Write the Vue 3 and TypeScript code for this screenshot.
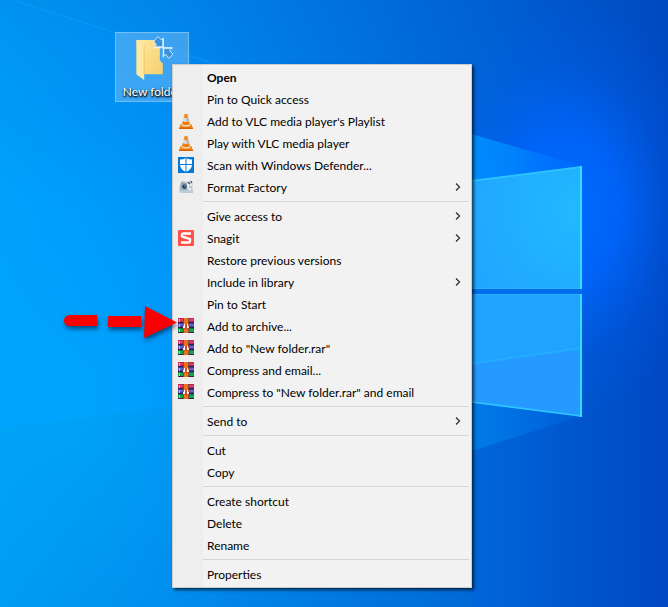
<script setup lang="ts">
type IconName = 'vlc' | 'defender' | 'factory' | 'snagit' | 'winrar'

interface MenuItem {
  label: string
  icon?: IconName
  submenu?: boolean
  primary?: boolean
}

const groups: MenuItem[][] = [
  [
    { label: 'Open', primary: true },
    { label: 'Pin to Quick access' },
    { label: "Add to VLC media player's Playlist", icon: 'vlc' },
    { label: 'Play with VLC media player', icon: 'vlc' },
    { label: 'Scan with Windows Defender...', icon: 'defender' },
    { label: 'Format Factory', icon: 'factory', submenu: true },
  ],
  [
    { label: 'Give access to', submenu: true },
    { label: 'Snagit', icon: 'snagit', submenu: true },
    { label: 'Restore previous versions' },
    { label: 'Include in library', submenu: true },
    { label: 'Pin to Start' },
    { label: 'Add to archive...', icon: 'winrar' },
    { label: 'Add to "New folder.rar"', icon: 'winrar' },
    { label: 'Compress and email...', icon: 'winrar' },
    { label: 'Compress to "New folder.rar" and email', icon: 'winrar' },
  ],
  [{ label: 'Send to', submenu: true }],
  [{ label: 'Cut' }, { label: 'Copy' }],
  [{ label: 'Create shortcut' }, { label: 'Delete' }, { label: 'Rename' }],
  [{ label: 'Properties' }],
]
</script>

<template>
  <main class="desktop">
    <svg class="wallpaper" viewBox="0 0 668 607" preserveAspectRatio="none" aria-hidden="true">
      <defs>
        <linearGradient id="base" x1="0" y1="0" x2="1" y2="0">
          <stop offset="0" stop-color="#00a4fb" />
          <stop offset="0.25" stop-color="#0092f5" />
          <stop offset="0.5" stop-color="#007ae6" />
          <stop offset="0.75" stop-color="#0062d6" />
          <stop offset="1" stop-color="#0047c2" />
        </linearGradient>
        <linearGradient id="topShade" x1="0" y1="0" x2="0" y2="1">
          <stop offset="0" stop-color="#004fb8" stop-opacity="0.2" />
          <stop offset="0.35" stop-color="#0060c8" stop-opacity="0" />
        </linearGradient>
        <radialGradient id="glow" gradientUnits="userSpaceOnUse" cx="0" cy="0" r="1" gradientTransform="translate(565 210) scale(150 210)">
          <stop offset="0" stop-color="#006cff" />
          <stop offset="0.35" stop-color="#0066ff" stop-opacity="0.85" />
          <stop offset="0.7" stop-color="#0060f4" stop-opacity="0.25" />
          <stop offset="1" stop-color="#0060ff" stop-opacity="0" />
        </radialGradient>
        <radialGradient id="leftGlow" gradientUnits="userSpaceOnUse" cx="0" cy="0" r="1" gradientTransform="translate(70 400) scale(230 280)">
          <stop offset="0" stop-color="#00adff" stop-opacity="0.7" />
          <stop offset="1" stop-color="#00a8ff" stop-opacity="0" />
        </radialGradient>
        <linearGradient id="lowerShade" x1="0" y1="0" x2="1" y2="1">
          <stop offset="0" stop-color="#0098e8" stop-opacity="0.2" />
          <stop offset="1" stop-color="#0070cc" stop-opacity="0.3" />
        </linearGradient>
        <radialGradient id="pane" gradientUnits="userSpaceOnUse" cx="582" cy="210" r="150">
          <stop offset="0" stop-color="#22b9ff" />
          <stop offset="1" stop-color="#20a2ff" />
        </radialGradient>
        <linearGradient id="beam" gradientUnits="userSpaceOnUse" x1="440" y1="0" x2="582" y2="0">
          <stop offset="0" stop-color="#0093ff" />
          <stop offset="0.5" stop-color="#0088ff" stop-opacity="0.85" />
          <stop offset="1" stop-color="#0070ff" stop-opacity="0.3" />
        </linearGradient>
        <linearGradient id="lowBeam" gradientUnits="userSpaceOnUse" x1="440" y1="0" x2="582" y2="0">
          <stop offset="0" stop-color="#0086ee" />
          <stop offset="1" stop-color="#0068e4" stop-opacity="0.4" />
        </linearGradient>
      </defs>
      <rect width="668" height="607" fill="url(#base)" />
      <rect width="668" height="607" fill="url(#topShade)" />
      <rect width="668" height="607" fill="url(#leftGlow)" />
      <path d="M0 0H12L472 136V360L0 428Z" fill="#0098ff" opacity=".18" />
      <path d="M0 428L172 406L472 360V607H0Z" fill="url(#lowerShade)" />
      <path d="M12 0L250 75" stroke="#35aef8" opacity=".28" />
      <rect x="400" width="268" height="490" fill="url(#glow)" />
      <path d="M440 125L582 166L440 186Z" fill="url(#beam)" />
      <path d="M440 390L582 416L440 461Z" fill="url(#lowBeam)" />
      <path d="M440 283H582V302H440Z" fill="#006eea" />
      <path d="M440 184L582 166V289H440Z" fill="url(#pane)" />
      <path d="M440 294H582V417L440 398Z" fill="#2499ff" />
      <path d="M440 294H582V348L440 368Z" fill="#20a4ff" opacity=".85" />
      <path d="M440 368L582 348" stroke="#25b4ff" stroke-width="2" opacity=".7" />
      <path d="M440 288.500H582M440 294.500H582" stroke="#38b6ff" opacity=".6" />
      <path d="M440 185L582 167M440 398L582 416" fill="none" stroke="#2cc5ff" stroke-width="1.500" />
      <path d="M581 166V289M581 294V417" fill="none" stroke="#35ddff" stroke-width="2" />
    </svg>

    <div class="shortcut">
      <svg class="folder" viewBox="0 0 44 48" aria-hidden="true">
        <defs>
          <linearGradient id="folderFront" x1="0" y1="0" x2="1" y2="1">
            <stop offset="0" stop-color="#ffe9a3" />
            <stop offset="1" stop-color="#f5d06d" />
          </linearGradient>
        </defs>
        <path d="M6 4H26L30 9V25L33 28V39H13Z" fill="url(#folderFront)" />
        <path d="M6 4L14 10V45L6 39Z" fill="#ffe8a0" />
        <path d="M14 10V39" stroke="#e8c360" stroke-width=".8" />
        <path d="M25 4L28 0.500L31.500 4L33 2.500V11H24.500L26.500 9L24 6Z" fill="#3893df" stroke="#d6eafa" />
        <path d="M34 12.500H42.500L40 15L43.500 18.500L39 23L36 18.500L34 20.500Z" fill="#3893df" stroke="#d6eafa" />
        <path d="M33.500 2V12H24M33.500 22V12H43" fill="none" stroke="#f4faff" />
      </svg>
      <span class="shortcut-name">New folder</span>
    </div>

    <div class="context-menu" role="menu" aria-label="New folder">
      <div v-for="(group, index) in groups" :key="index" class="group" role="group">
        <button v-for="item in group" :key="item.label" type="button" role="menuitem" class="item" :class="{ primary: item.primary }">
          <span class="icon" aria-hidden="true">
            <svg v-if="item.icon === 'vlc'" viewBox="0 0 16 16">
              <path d="M2.500 11H13.500L15 16H1Z" fill="#f28a1c" />
              <path d="M1 14.500H15V16H1Z" fill="#d96300" />
              <path d="M7 0H9L12.500 12Q8 15 3.500 12Z" fill="#e8e5e0" />
              <path d="M6.700 1H9.300L10.300 4.500Q8 5.500 5.700 4.500Z" fill="#f58a1d" />
              <path d="M4.900 8Q8 9.500 11.100 8L12 11Q8 13.500 4 11Z" fill="#f27c0b" />
              <path d="M5.700 4.500Q8 5.500 10.300 4.500L11.100 8Q8 9.500 4.900 8Z" fill="#d9dadb" />
              <path d="M8 5H10.400L11.100 8L9 8.700Z" fill="#b4b7ba" />
            </svg>
            <svg v-else-if="item.icon === 'defender'" viewBox="0 0 16 16">
              <path d="M0 0H16V16H0Z" fill="#0078d7" />
              <path d="M8 1Q11 2.500 14 2.500V7Q14 12.500 8 15Q2 12.500 2 7V2.500Q5 2.500 8 1Z" fill="#fff" />
              <path d="M8 1V15M2 7.500H14" stroke="#0078d7" />
            </svg>
            <svg v-else-if="item.icon === 'factory'" viewBox="0 0 16 16">
              <path d="M2 4L5 2L9 3L13 2L15 6L14 14L3 14L1 12Z" fill="#c2ccd5" />
              <path d="M2 5L5 3L7 4L4 13L2 12Z" fill="#b1bdc8" />
              <path d="M2 11L5 10L10 13L15 11V14H3Z" fill="#b9c9d6" />
              <circle cx="6.500" cy="7.500" r="3.500" fill="#8397ab" />
              <circle cx="6.500" cy="7.500" r="2" fill="#203a5c" />
              <circle cx="7" cy="7" r=".8" fill="#80b6db" />
              <path d="M9 5L13 4L15 7L12 12L9 9Z" fill="#e6ebf0" />
              <path d="M10 3L12 5M13 2L14 4" stroke="#475767" stroke-width="1.300" />
              <path d="M11 8L14 8M3 4L5 3" stroke="#8a99a8" />
            </svg>
            <svg v-else-if="item.icon === 'snagit'" viewBox="0 0 16 16">
              <rect width="16" height="16" rx="1" fill="#ff5147" />
              <path d="M13 3.500H5.500Q4 3.500 4 5V6.300L12 9.200V11Q12 12.500 10.500 12.500H3" fill="none" stroke="#fff" stroke-width="2.400" />
            </svg>
            <svg v-else-if="item.icon === 'winrar'" viewBox="0 0 16 16">
              <path d="M0 0H16V5H0Z" fill="#bc2358" />
              <path d="M0 1H16V3H0Z" fill="#df3b67" />
              <path d="M0 5H16V10H0Z" fill="#3e3c9e" />
              <path d="M0 6H16V8H0Z" fill="#6260c5" />
              <path d="M0 10H16V15H0Z" fill="#087737" />
              <path d="M0 11H16V14H0Z" fill="#16a24b" />
              <path d="M0 4.500H16M0 9.500H16M0 14.500H16" stroke="#342044" />
              <path d="M1.500 1V4M1.500 6V9M1.500 11V14" stroke="#e8ca48" />
              <path d="M5 0H11V15H5Z" fill="#7d4934" />
              <path d="M6 0H10V15H6Z" fill="#ef711f" />
              <path d="M5 6H11V11H5Z" fill="#d44e26" />
              <path d="M6 6H7V10H6ZM9 6H10V10H9Z" fill="#fff" />
              <path d="M5 8H6V10H5ZM10 8H11V10H10Z" fill="#f3e6e0" />
            </svg>
          </span>
          <span class="label">{{ item.label }}</span>
          <svg v-if="item.submenu" class="chevron" viewBox="0 0 6 8" aria-hidden="true">
            <path d="M1 0.500L4.500 4L1 7.500" fill="none" stroke="#333" stroke-width="1.300" />
          </svg>
        </button>
      </div>
    </div>

    <svg class="pointer" viewBox="0 0 120 40" aria-hidden="true">
      <path d="M7 12H35V23H7Q2 22 2 17.500Q2 13 7 12ZM46 13H79V24H46ZM83 3L115 19.500L82 35Z" fill="#fb0000" />
    </svg>
  </main>
</template>

<style>
body {
  margin: 0;
}
</style>

<style scoped>
.desktop {
  position: relative;
  min-height: 100vh;
  overflow: hidden;
  background: #0078e6;
  font-family: Lato, "Open Sans", sans-serif;
  font-size: 12px;
}

.wallpaper {
  position: absolute;
  inset: 0;
  width: 100%;
  height: 100%;
}

.shortcut {
  position: absolute;
  top: 32px;
  left: 115px;
  display: flex;
  flex-direction: column;
  align-items: center;
  box-sizing: border-box;
  width: 74px;
  height: 70px;
  padding-top: 3px;
  border: 1px solid #70c0f8;
  background: rgb(120 190 245 / 50%);
}

.folder {
  width: 44px;
  height: 48px;
}

.shortcut-name {
  color: #fff;
  line-height: 18px;
  white-space: nowrap;
  text-shadow: 1px 1px 2px #000, 0 1px 2px #000;
}

.context-menu {
  position: absolute;
  top: 64px;
  left: 172px;
  box-sizing: border-box;
  width: 300px;
  padding: 1px 2px 2px;
  border: 1px solid #ccc;
  background: linear-gradient(to right, #eee 30px, #f2f2f2 30px);
  box-shadow: 2px 2px 3px rgb(0 0 0 / 65%);
}

.group + .group::before {
  content: "";
  display: block;
  height: 1px;
  margin: 3px 0 3px 28px;
  background: #d5d5d5;
}

.item {
  display: flex;
  align-items: center;
  width: 100%;
  height: 22px;
  padding: 0 8px 0 3px;
  border: 0;
  background: transparent;
  color: #000;
  font: inherit;
  text-align: left;
}

.item:hover,
.item:focus-visible {
  outline: 0;
  background: #fff;
}

.item.primary {
  font-weight: 700;
}

.icon {
  flex: none;
  width: 16px;
  height: 16px;
  margin-right: 13px;
}

.icon svg {
  display: block;
  width: 16px;
  height: 16px;
}

.label {
  flex: 1;
  white-space: nowrap;
}

.chevron {
  width: 6px;
  height: 8px;
}

.pointer {
  position: absolute;
  top: 303px;
  left: 62px;
  width: 120px;
  height: 40px;
  filter: drop-shadow(1px 3px 2px rgb(0 20 60 / 60%));
}
</style>
